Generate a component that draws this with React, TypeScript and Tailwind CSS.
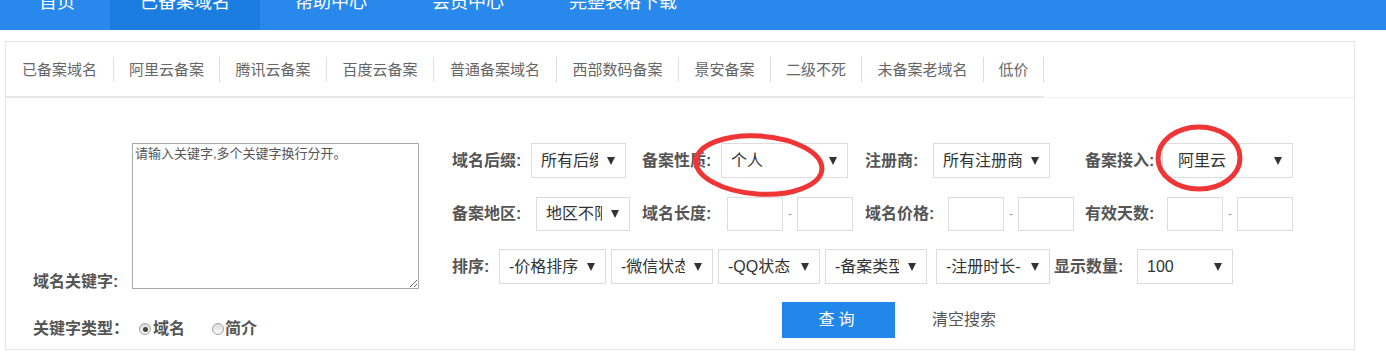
import React from "react";

function Arrow() {
  return (
    <svg width="8" height="8" viewBox="0 0 8 8" className="shrink-0 ml-[9px]">
      <polygon points="0,0 8,0 4,8" fill="#333" />
    </svg>
  );
}

function Sel({ cls, text, pad = "pl-[9px]" }: { cls: string; text: string; pad?: string }) {
  return (
    <div className={`flex items-center border border-[#dcdcdc] bg-white pr-[10px] ${pad} ${cls}`}>
      <span className="flex-1 overflow-hidden whitespace-nowrap text-[16px] leading-[20px] text-[#333]">{text}</span>
      <Arrow />
    </div>
  );
}

function Inp() {
  return <div className="w-[56px] h-[34px] border border-[#dcdcdc] bg-white" />;
}

function Range() {
  return (
    <div className="flex items-center">
      <Inp />
      <span className="w-[14px] text-center text-[12px] text-[#999]">-</span>
      <Inp />
    </div>
  );
}

function Label({ cls, children }: { cls: string; children: React.ReactNode }) {
  return <span className={`shrink-0 whitespace-nowrap text-[16px] font-bold leading-[20px] text-[#555] ${cls}`}>{children}</span>;
}

function Radio({ checked }: { checked?: boolean }) {
  return (
    <span className="flex items-center justify-center w-[12px] h-[12px] rounded-full border border-[#a0a0a0] bg-gradient-to-b from-[#dcdcdc] to-[#f8f8f8]">
      {checked ? <span className="w-[5px] h-[5px] rounded-full bg-[#444]" /> : null}
    </span>
  );
}

const navItems = ["首页", "已备案域名", "帮助中心", "会员中心", "完整表格下载"];
const tabs = [
  { t: "已备案域名", w: "w-[108px]" },
  { t: "阿里云备案", w: "w-[106px]" },
  { t: "腾讯云备案", w: "w-[107px]" },
  { t: "百度云备案", w: "w-[107px]" },
  { t: "普通备案域名", w: "w-[123px]" },
  { t: "西部数码备案", w: "w-[122px]" },
  { t: "景安备案", w: "w-[92px]" },
  { t: "二级不死", w: "w-[91px]" },
  { t: "未备案老域名", w: "w-[122px]" },
  { t: "低价", w: "w-[60px]" },
];

export default function App() {
  return (
    <div className="relative w-[1386px] h-[352px] overflow-hidden bg-white font-['Liberation_Sans','Noto_Sans_CJK_SC',sans-serif]">
      {/* top nav */}
      <div className="flex h-[30px] bg-[#2888eb] pl-[9px] gap-[5px]">
        {navItems.map((n, i) => (
          <div
            key={n}
            className={`flex items-start h-[30px] overflow-hidden px-[30px] ${i === 1 ? "bg-[#1b7de0]" : ""}`}
          >
            <span className="-mt-[7px] text-[18px] leading-[18px] text-white whitespace-nowrap">{n}</span>
          </div>
        ))}
      </div>

      {/* panel */}
      <div className="mt-[11px] ml-[5px] w-[1350px] h-[309px] border border-[#e6e6e6]">
        {/* tabs */}
        <div className="flex border-b border-[#efefef]">
          <ul className="flex items-center h-[56px] border-b-2 border-[#e6e6e6] -mb-[1px]">
            {tabs.map((x) => (
              <li key={x.t} className={`${x.w} text-center border-r border-[#dddddd] text-[15px] leading-[25px] text-[#666] whitespace-nowrap`}>
                {x.t}
              </li>
            ))}
          </ul>
        </div>

        {/* form */}
        <div className="flex pl-[27px] pt-[45px]">
          {/* left */}
          <div className="flex flex-col">
            <div className="flex items-end">
              <Label cls="w-[99px] leading-[16px] -mb-[3px]">域名关键字:</Label>
              <textarea
                className="w-[287px] h-[146px] border border-[#a9a9a9] px-[2px] py-[2px] text-[13px] leading-[16px] text-[#555] placeholder:text-[#555] outline-none font-['Liberation_Sans','Noto_Sans_CJK_SC',sans-serif]"
                placeholder="请输入关键字,多个关键字换行分开。"
              />
            </div>
            <div className="flex items-center mt-[30px] h-[20px]">
              <Label cls="w-[106px]">关键字类型：</Label>
              <Radio checked />
              <span className="ml-[2px] text-[16px] font-bold leading-[20px] text-[#555]">域名</span>
              <span className="ml-[27px]">
                <Radio />
              </span>
              <span className="ml-[1px] text-[16px] font-bold leading-[20px] text-[#555]">简介</span>
            </div>
          </div>

          {/* right */}
          <div className="ml-[33px] flex flex-col gap-[18px]">
            {/* row 1 */}
            <div className="flex items-center h-[35px]">
              <div className="flex items-center w-[190px]">
                <Label cls="w-[79px]">域名后缀:</Label>
                <Sel cls="w-[95px] h-[35px]" text="所有后缀" />
              </div>
              <div className="flex items-center w-[223px]">
                <Label cls="w-[79px]">备案性质:</Label>
                <Sel cls="w-[127px] h-[35px]" text="个人" />
              </div>
              <div className="flex items-center w-[220px]">
                <Label cls="w-[68px]">注册商:</Label>
                <Sel cls="w-[117px] h-[35px]" text="所有注册商" />
              </div>
              <div className="flex items-center">
                <Label cls="w-[77px]">备案接入:</Label>
                <Sel cls="w-[131px] h-[35px]" pad="pl-[15px]" text="阿里云" />
              </div>
            </div>

            {/* row 2 */}
            <div className="flex items-center h-[35px]">
              <div className="flex items-center w-[190px]">
                <Label cls="w-[84px]">备案地区:</Label>
                <Sel cls="w-[94px] h-[34px]" text="地区不限" />
              </div>
              <div className="flex items-center w-[223px]">
                <Label cls="w-[85px]">域名长度:</Label>
                <Range />
              </div>
              <div className="flex items-center w-[220px]">
                <Label cls="w-[83px]">域名价格:</Label>
                <Range />
              </div>
              <div className="flex items-center">
                <Label cls="w-[82px]">有效天数:</Label>
                <Range />
              </div>
            </div>

            {/* row 3 */}
            <div className="flex items-center h-[35px]">
              <Label cls="w-[47px]">排序:</Label>
              <Sel cls="w-[107px] h-[35px]" text="-价格排序" />
              <Sel cls="ml-[5px] w-[102px] h-[35px]" text="-微信状态" />
              <Sel cls="ml-[5px] w-[102px] h-[35px]" text="-QQ状态" />
              <Sel cls="ml-[5px] w-[102px] h-[35px]" text="-备案类型" />
              <Sel cls="ml-[9px] w-[114px] h-[35px]" text="-注册时长-" />
              <Label cls="ml-[4px] w-[83px]">显示数量:</Label>
              <Sel cls="w-[96px] h-[35px]" text="100" />
            </div>

            {/* row 4 */}
            <div className="flex items-center h-[36px]">
              <button className="ml-[330px] w-[113px] h-[36px] bg-[#2188ea] text-white text-[16px] leading-[20px] tracking-[4px]">
                查询
              </button>
              <span className="ml-[37px] text-[16px] leading-[20px] text-[#555]">清空搜索</span>
            </div>
          </div>
        </div>
      </div>

      {/* red annotation ellipses */}
      <svg className="absolute left-0 top-0 pointer-events-none" width="1386" height="352">
        <ellipse cx="759" cy="165" rx="63" ry="29" fill="none" stroke="#ef3535" strokeWidth="5" transform="rotate(4 759 165)" />
        <ellipse cx="1199" cy="158" rx="41" ry="31" fill="none" stroke="#ef3535" strokeWidth="5" />
      </svg>
    </div>
  );
}
